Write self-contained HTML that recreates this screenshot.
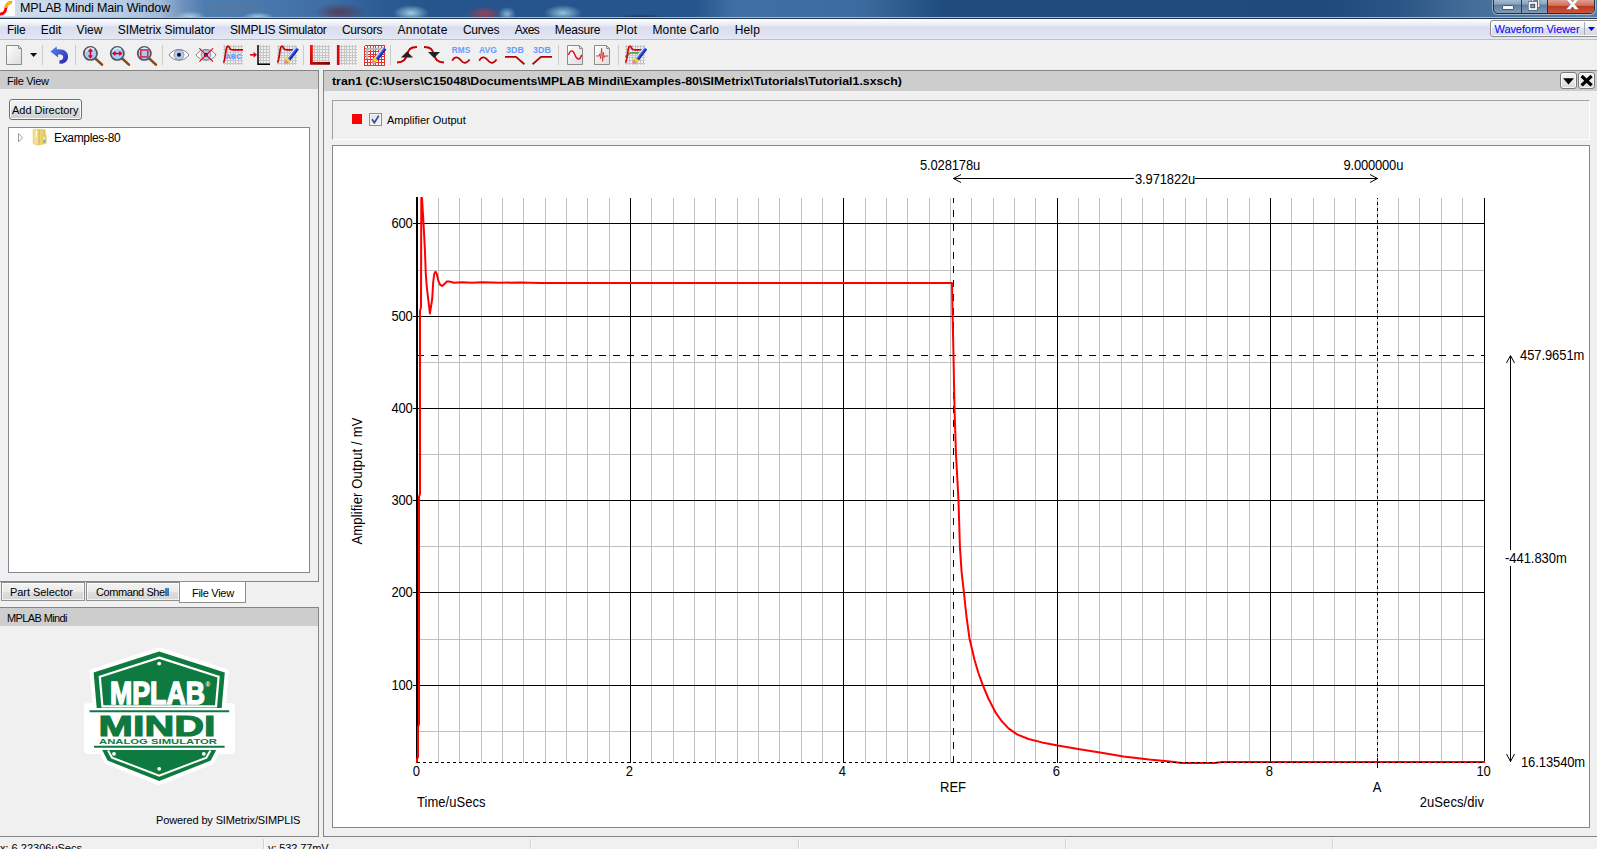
<!DOCTYPE html>
<html lang="en"><head><meta charset="utf-8"><title>MPLAB Mindi Main Window</title>
<style>
*{box-sizing:border-box;margin:0;padding:0}
html,body{width:1597px;height:849px;overflow:hidden;background:#f0f0f0}
body{position:relative;font-family:"Liberation Sans",sans-serif;font-size:11px;color:#000}
.abs{position:absolute}
.t{position:absolute;white-space:nowrap;line-height:1}
#titlebar{left:0;top:0;width:1597px;height:17px;overflow:hidden;background:
  radial-gradient(ellipse 26px 9px at 340px 12px, rgba(85,55,80,.9), rgba(85,55,80,0) 100%),
  radial-gradient(ellipse 18px 8px at 484px 14px, rgba(170,60,75,.85), rgba(170,60,75,0) 100%),
  radial-gradient(ellipse 9px 7px at 507px 14px, rgba(160,200,235,.8), rgba(160,200,235,0) 100%),
  radial-gradient(ellipse 18px 8px at 411px 13px, rgba(165,210,230,.95), rgba(165,210,230,0) 100%),
  radial-gradient(ellipse 19px 8px at 563px 13px, rgba(160,205,228,.9), rgba(160,205,228,0) 100%),
  radial-gradient(ellipse 26px 4px at 642px 18px, rgba(20,30,50,.7), rgba(20,30,50,0) 100%),
  radial-gradient(ellipse 40px 5px at 235px 8px, rgba(100,118,140,.55), rgba(100,118,140,0) 100%),
  radial-gradient(ellipse 16px 5px at 258px 17px, rgba(170,212,238,.85), rgba(170,212,238,0) 100%),
  radial-gradient(ellipse 16px 6px at 190px 17px, rgba(195,218,240,.8), rgba(195,218,240,0) 100%),
  linear-gradient(90deg,#d4e0ee 0px,#cbd9ea 40px,#b9cce2 120px,#a3bbd7 160px,#6e93bc 182px,#4d7cb0 205px,#4878ac 260px,#3d6da3 330px,#2a5a92 385px,#25558c 430px,#25558c 695px,#3f6fa3 735px,#3c6b9f 860px,#2a578a 915px,#1f4b7d 945px,#1f4a7c 1330px,#2a5584 1400px,#456d9a 1470px,#5b80a8 1597px)}
#menubar{left:0;top:19px;width:1597px;height:20px;background:linear-gradient(180deg,#ffffff 0px,#f3f5fa 3px,#e3e7f3 7px,#d9deee 8px,#dde1f0 14px,#e4e8f4 20px)}
.mi{position:absolute;top:4px;font-size:12px;line-height:14px;white-space:nowrap}
.sep{position:absolute;top:45px;width:1px;height:20px;background:#cbcbcb}
.ptitle{position:absolute;background:#cdcdcd}
.tab{position:absolute;border:1px solid #8e8f8f;background:linear-gradient(180deg,#f2f2f2 0,#ebebeb 50%,#dedede 51%,#d4d4d4 100%);box-shadow:inset 0 0 0 1px rgba(255,255,255,.7)}
.pt{font-size:13px}
</style></head><body>
<div id="titlebar" class="abs">
<div class="abs" style="left:0;top:0;width:15px;height:16px;background:#fff"></div>
<svg class="abs" style="left:0;top:0" width="15" height="16" viewBox="0 0 15 16"><defs><clipPath id="ct"><rect x="0" y="0" width="15" height="7.8"/></clipPath></defs><path d="M-1 14.2 C3.4 14.2 5 12.4 5.6 9.6 C6.2 6.4 6.6 2.4 11.6 2.3" fill="none" stroke="#ff0000" stroke-width="2.8"/><path d="M-1 14.2 C3.4 14.2 5 12.4 5.6 9.6 C6.2 6.4 6.6 2.4 11.6 2.3" fill="none" stroke="#ffb800" stroke-width="2.8" clip-path="url(#ct)"/></svg>
<div class="t" id="title" style="left:20px;top:1px;font-size:12.5px;line-height:14px;letter-spacing:-0.184px;">MPLAB Mindi Main Window</div>
<!-- caption buttons -->
<div class="abs" style="left:1493px;top:-4px;width:102px;height:18px;border:1px solid #23303f;border-radius:0 0 5px 5px;background:linear-gradient(180deg,#b9c9dc 0,#8aa3bf 45%,#5f7e9f 50%,#7f9bb8 100%);box-shadow:0 0 0 1px rgba(255,255,255,.45)"></div>
<div class="abs" style="left:1521px;top:0;width:1px;height:13px;background:#2c3a4b"></div>
<div class="abs" style="left:1547px;top:0;width:47px;height:13px;border-radius:0 0 4px 0;background:linear-gradient(180deg,#e0a090 0,#cf6a55 45%,#bb3a22 50%,#c9553a 100%);border-left:1px solid #3a2a2a"></div>
<div class="abs" style="left:1502px;top:5px;width:12px;height:5px;background:#f6f7f9;border:1px solid #4a5868;border-radius:1px"></div>
<svg class="abs" style="left:1525px;top:0" width="18" height="13" viewBox="1525 0 18 13"><rect x="1532.6" y="-0.6" width="6.2" height="7" fill="none" stroke="#3d4b5c" stroke-width="2.6"/><rect x="1532.6" y="-0.6" width="6.2" height="7" fill="none" stroke="#eef1f5" stroke-width="1.5"/><rect x="1529.5" y="2.9" width="6.6" height="6.2" fill="#6f88a4" stroke="#3d4b5c" stroke-width="3"/><rect x="1529.5" y="2.9" width="6.6" height="6.2" fill="#6f88a4" stroke="#f2f4f7" stroke-width="1.9"/><rect x="1530.9" y="4.3" width="3.8" height="3.4" fill="#7f97b2" stroke="#3d4b5c" stroke-width=".7"/></svg>
<div class="t" style="left:1566.6px;top:-3.5px;font-size:16px;font-weight:bold;color:#fff;line-height:14px;text-shadow:0 0 1px #40202a,0 0 1px #40202a;-webkit-text-stroke:.5px #fff;transform:scaleX(1.25);transform-origin:0 0">x</div>
</div>
<div class="abs" style="left:0;top:17px;width:1597px;height:1px;background:#a7bbd1"></div>
<div class="abs" style="left:0;top:18px;width:1597px;height:1px;background:#22364f"></div>
<div id="menubar" class="abs"><span class="mi" id="m0" style="left:7.0px;letter-spacing:-0.211px;">File</span><span class="mi" id="m1" style="left:40.8px;letter-spacing:-0.022px;">Edit</span><span class="mi" id="m2" style="left:76.6px;letter-spacing:-0.001px;">View</span><span class="mi" id="m3" style="left:117.7px;letter-spacing:-0.057px;">SIMetrix Simulator</span><span class="mi" id="m4" style="left:229.9px;letter-spacing:-0.275px;">SIMPLIS Simulator</span><span class="mi" id="m5" style="left:341.9px;letter-spacing:-0.245px;">Cursors</span><span class="mi" id="m6" style="left:397.5px;letter-spacing:0.257px;">Annotate</span><span class="mi" id="m7" style="left:462.9px;letter-spacing:-0.287px;">Curves</span><span class="mi" id="m8" style="left:514.8px;letter-spacing:-0.547px;">Axes</span><span class="mi" id="m9" style="left:554.8px;letter-spacing:-0.157px;">Measure</span><span class="mi" id="m10" style="left:615.7px;letter-spacing:0.28px;">Plot</span><span class="mi" id="m11" style="left:652.5px;letter-spacing:0.113px;">Monte Carlo</span><span class="mi" id="m12" style="left:734.7px;letter-spacing:0.155px;">Help</span><div class="abs" style="left:1490px;top:1px;width:110px;height:17px;border:1px solid #8b8b8b;border-radius:3px;background:linear-gradient(180deg,#fbfbfd 0,#eef0f6 45%,#dfe2ec 50%,#d6d9e6 100%);box-shadow:inset 0 0 0 1px rgba(255,255,255,.8)"></div>
<div class="t" id="wv" style="left:1494.5px;top:4px;font-size:11px;line-height:13px;color:#0000ff;letter-spacing:-0.08px;">Waveform Viewer</div>
<div class="abs" style="left:1584px;top:3px;width:1px;height:13px;background:#a9a9b4"></div>
<svg class="abs" style="left:1588px;top:8px" width="8" height="5"><path d="M0 0H7L3.5 4Z" fill="#0000ff"/></svg>
</div>
<div class="abs" style="left:0;top:39px;width:1597px;height:1px;background:#b9bfd0"></div>
<svg class="abs" style="left:0;top:40px" width="700" height="30" viewBox="0 40 700 30">
<defs><linearGradient id="gdoc" x1="0" y1="0" x2="1" y2="1"><stop offset="0" stop-color="#ffffff"/><stop offset="1" stop-color="#dcdcdc"/></linearGradient><linearGradient id="gundo" x1="0" y1="0" x2="1" y2="1"><stop offset="0" stop-color="#4f8ae8"/><stop offset="1" stop-color="#2e22b8"/></linearGradient><linearGradient id="gred" x1="0" y1="0" x2="1" y2="1"><stop offset="0" stop-color="#ff1010"/><stop offset="1" stop-color="#7a0000"/></linearGradient></defs>
<path d="M6.5 45.5H18.5L21.5 48.5V64.5H6.5Z" fill="url(#gdoc)" stroke="#8c8c8c"/><path d="M18.5 45.5V48.5H21.5" fill="none" stroke="#8c8c8c"/>
<path d="M30 53H37.2L33.6 57Z" fill="#111"/>
<path d="M50.4 51.4 L56.6 46.6 L57 49.4 C64 48.4 68.6 52 68 57.4 C67.6 61.6 63.6 64.4 59.4 63.6 L59.4 60.2 C62 60.4 63.4 58.8 63.2 56.8 C63 54.6 60.6 54.2 57.8 54.6 L58.2 57.4 Z" fill="url(#gundo)"/>
<g>
<path d="M95.4 58.6 L102.0 64.6" stroke="#8a4512" stroke-width="2.6" stroke-linecap="round"/>
<path d="M95.0 58.2 L97.4 60.4" stroke="#5a5f66" stroke-width="2.2"/>
<circle cx="90.4" cy="53.4" r="6.6" fill="#a9cbf7" stroke="#4e565f" stroke-width="1.7"/>
<path d="M85.80000000000001 51.6 A5 5 0 0 1 94.0 49.4" stroke="#e4f0ff" stroke-width="1.5" fill="none"/>
<path d="M90.4 50V57M88.6 51.6L90.4 49.4L92.2 51.6M88.6 55.4L90.4 57.6L92.2 55.4" stroke="#e00018" stroke-width="1.5" fill="none"/></g><g>
<path d="M122.3 58.6 L128.9 64.6" stroke="#8a4512" stroke-width="2.6" stroke-linecap="round"/>
<path d="M121.89999999999999 58.2 L124.3 60.4" stroke="#5a5f66" stroke-width="2.2"/>
<circle cx="117.3" cy="53.4" r="6.6" fill="#a9cbf7" stroke="#4e565f" stroke-width="1.7"/>
<path d="M112.7 51.6 A5 5 0 0 1 120.89999999999999 49.4" stroke="#e4f0ff" stroke-width="1.5" fill="none"/>
<path d="M113.8 53.4H120.8M115.4 51.6L113.2 53.4L115.4 55.2M119.2 51.6L121.4 53.4L119.2 55.2" stroke="#e00018" stroke-width="1.5" fill="none"/></g><g>
<path d="M149.3 58.6 L155.9 64.6" stroke="#8a4512" stroke-width="2.6" stroke-linecap="round"/>
<path d="M148.9 58.2 L151.3 60.4" stroke="#5a5f66" stroke-width="2.2"/>
<circle cx="144.3" cy="53.4" r="6.6" fill="#a9cbf7" stroke="#4e565f" stroke-width="1.7"/>
<path d="M139.70000000000002 51.6 A5 5 0 0 1 147.9 49.4" stroke="#e4f0ff" stroke-width="1.5" fill="none"/>
<rect x="140.8" y="49.9" width="7" height="7" fill="none" stroke="#d8243c" stroke-width="1.5"/></g><path d="M169 55 C174 47.6 184 47.6 189 55 C184 62 174 62 169 55Z" fill="#fffdf8" stroke="#555" stroke-width=".7"/><circle cx="179" cy="54.8" r="5" fill="#b4cbf6" stroke="#6a7896" stroke-width=".7"/><circle cx="179" cy="54.8" r="2" fill="#111"/><path d="M196 55 C201 47.6 211 47.6 216 55 C211 62 201 62 196 55Z" fill="#fffdf8" stroke="#555" stroke-width=".7"/><circle cx="206" cy="54.8" r="5" fill="#b4cbf6" stroke="#6a7896" stroke-width=".7"/><circle cx="206" cy="54.8" r="2" fill="#111"/><path d="M199.4 48.4L213 61.6M213 48.4L199.4 61.6" stroke="#e00010" stroke-width="1.2"/><path d="M224.4 45V65M227.3 45V65M230.1 45V65M233.0 45V65M235.8 45V65M238.7 45V65M241.6 45V65M223 46.4H243M223 49.3H243M223 52.1H243M223 55.0H243M223 57.8H243M223 60.7H243M223 63.6H243" stroke="#c6c6c6" stroke-width="1" fill="none" shape-rendering="crispEdges"/><path d="M223.4 62.6 C225 61 225.6 52 226.4 48.4 C227 45.6 228.6 45.6 229.4 47.8 C230 49.6 231 49.9 233 49.9 H243" fill="none" stroke="#c80000" stroke-width="1.7"/><text x="233.5" y="59.4" font-family="Liberation Sans,sans-serif" font-weight="bold" font-size="7.6" fill="#6896ff" text-anchor="middle" textLength="16" lengthAdjust="spacingAndGlyphs">ABC</text>
<path d="M260.9 45V64M263.8 45V64M266.6 45V64M269.5 45V64M259 46.4H270M259 49.3H270M259 52.1H270M259 55.0H270M259 57.8H270M259 60.7H270M259 63.6H270" stroke="#c6c6c6" stroke-width="1" fill="none" shape-rendering="crispEdges"/><path d="M258 45V64.3H270" fill="none" stroke="#000" stroke-width="1.5"/><path d="M250 54.8H254.4" stroke="#e00018" stroke-width="1.6"/><path d="M253.6 51.8L257 54.8L253.6 57.8Z" fill="#e00018"/>
<path d="M278.4 45V65M281.3 45V65M284.1 45V65M287.0 45V65M289.8 45V65M292.7 45V65M295.6 45V65M277 46.4H297M277 49.3H297M277 52.1H297M277 55.0H297M277 57.8H297M277 60.7H297M277 63.6H297" stroke="#c6c6c6" stroke-width="1" fill="none" shape-rendering="crispEdges"/><path d="M277.4 62.6 C279 61 279.6 52 280.4 48.4 C281 45.6 282.6 45.6 283.4 47.8 C284 49.6 285 49.9 287 49.9 H294" fill="none" stroke="#c80000" stroke-width="1.7"/><g transform="translate(285.0 63.5) rotate(-52)">
<rect x="5.6" y="-2.2" width="13.799999999999999" height="4.4" fill="#1c3ccc"/>
<rect x="5.6" y="-2.2" width="13.799999999999999" height="1.5" fill="#e6ecff"/>
<rect x="5.6" y="-0.9" width="13.799999999999999" height="1.1" fill="#5878ee"/>
<rect x="5.6" y="1.4" width="13.799999999999999" height=".8" fill="#10208c"/>
<rect x="3.2" y="-2.3" width="2.6" height="4.6" fill="#f6dc00"/>
<path d="M3.3 -2.2H1.6C-.9 -2.2 -.9 2.2 1.6 2.2H3.3Z" fill="#de8f96"/>
</g><path d="M314.2 45V62M317.1 45V62M319.9 45V62M322.8 45V62M325.6 45V62M328.5 45V62M312 46.4H330M312 49.3H330M312 52.1H330M312 55.0H330M312 57.8H330M312 60.7H330" stroke="#c6c6c6" stroke-width="1" fill="none" shape-rendering="crispEdges"/><path d="M311.4 45V63.4H330" fill="none" stroke="url(#gred)" stroke-width="2.8"/>
<path d="M341.2 45V65M344.1 45V65M346.9 45V65M349.8 45V65M352.6 45V65M355.5 45V65M339 46.4H357M339 49.3H357M339 52.1H357M339 55.0H357M339 57.8H357M339 60.7H357M339 63.6H357" stroke="#c6c6c6" stroke-width="1" fill="none" shape-rendering="crispEdges"/><path d="M338.2 45V65" fill="none" stroke="#e00010" stroke-width="2.6"/>
<rect x="364" y="45" width="21" height="21" fill="#fff"/><path d="M364.5 45.5V65.5M367.4 45.5V65.5M370.2 45.5V65.5M373.1 45.5V65.5M375.9 45.5V65.5M378.8 45.5V65.5M381.6 45.5V65.5M384.5 45.5V65.5M364.5 45.5H384.5M364.5 48.4H384.5M364.5 51.2H384.5M364.5 54.1H384.5M364.5 56.9H384.5M364.5 59.8H384.5M364.5 62.6H384.5M364.5 65.5H384.5" stroke="#e43030" stroke-width="1" fill="none" shape-rendering="crispEdges"/><path d="M367 59V48.8H382" fill="none" stroke="#b8b8b8" stroke-width="2.2"/><g transform="translate(372.6 63.5) rotate(-52)">
<rect x="5.6" y="-2.2" width="13.799999999999999" height="4.4" fill="#1c3ccc"/>
<rect x="5.6" y="-2.2" width="13.799999999999999" height="1.5" fill="#e6ecff"/>
<rect x="5.6" y="-0.9" width="13.799999999999999" height="1.1" fill="#5878ee"/>
<rect x="5.6" y="1.4" width="13.799999999999999" height=".8" fill="#10208c"/>
<rect x="3.2" y="-2.3" width="2.6" height="4.6" fill="#f6dc00"/>
<path d="M3.3 -2.2H1.6C-.9 -2.2 -.9 2.2 1.6 2.2H3.3Z" fill="#de8f96"/>
</g><path d="M397 62.4 C405 62.4 405.6 58 407 54.6 C408.4 51 409 47 417 47" fill="none" stroke="#c40000" stroke-width="2"/><path d="M401 57.6H413L407 51.4Z" fill="#222"/>
<path d="M424 47 C432 47 432.6 51 434 54.6 C435.4 58 436 62.4 444 62.4" fill="none" stroke="#c40000" stroke-width="2"/><path d="M428 52H440L434 58Z" fill="#222"/>
<text x="461" y="52.8" font-family="Liberation Sans,sans-serif" font-weight="bold" font-size="8.6" fill="#6a9cff" text-anchor="middle" textLength="18.4" lengthAdjust="spacingAndGlyphs">RMS</text><path d="M452.2 60.6 C454.2 57 457.2 56 460.8 60.2 C464.2 64.4 467.2 63 469.59999999999997 59.6" fill="none" stroke="#b80000" stroke-width="1.8"/><text x="488" y="52.8" font-family="Liberation Sans,sans-serif" font-weight="bold" font-size="8.6" fill="#6a9cff" text-anchor="middle" textLength="18" lengthAdjust="spacingAndGlyphs">AVG</text><path d="M479.2 60.6 C481.2 57 484.2 56 487.8 60.2 C491.2 64.4 494.2 63 496.59999999999997 59.6" fill="none" stroke="#b80000" stroke-width="1.8"/><text x="515" y="52.8" font-family="Liberation Sans,sans-serif" font-weight="bold" font-size="8.6" fill="#6a9cff" text-anchor="middle" textLength="17.8" lengthAdjust="spacingAndGlyphs">3DB</text><path d="M505 56.8H516L524.4 64.2" fill="none" stroke="#b80000" stroke-width="1.8"/><text x="542" y="52.8" font-family="Liberation Sans,sans-serif" font-weight="bold" font-size="8.6" fill="#6a9cff" text-anchor="middle" textLength="17.8" lengthAdjust="spacingAndGlyphs">3DB</text><path d="M532.6 64.2L541 56.8H552" fill="none" stroke="#b80000" stroke-width="1.8"/>
<path d="M567.5 45.5H579.5L582.5 48.5V64.5H567.5Z" fill="url(#gdoc)" stroke="#8c8c8c"/><path d="M579.5 45.5V48.5H582.5" fill="none" stroke="#8c8c8c"/><path d="M568.6 55 C570 49.6 573 49.6 575 55 C577 60.4 580 60.4 581.6 55" fill="none" stroke="#e00018" stroke-width="1.3"/><path d="M594.5 45.5H606.5L609.5 48.5V64.5H594.5Z" fill="url(#gdoc)" stroke="#8c8c8c"/><path d="M606.5 45.5V48.5H609.5" fill="none" stroke="#8c8c8c"/><path d="M596 56H599L599.8 53.8L600.6 58.6L601.6 48.4L602.6 61.4L603.4 52.4L604.2 57.6L605 56H608" fill="none" stroke="#d03030" stroke-width=".9"/>
<path d="M626.4 45V65M629.3 45V65M632.1 45V65M635.0 45V65M637.8 45V65M640.7 45V65M643.6 45V65M625 46.4H645M625 49.3H645M625 52.1H645M625 55.0H645M625 57.8H645M625 60.7H645M625 63.6H645" stroke="#c6c6c6" stroke-width="1" fill="none" shape-rendering="crispEdges"/><path d="M625.4 57 C627 56 628 53 631 53 H641" fill="none" stroke="#30a040" stroke-width="1.6"/><path d="M625.4 62.6 C627 61 627.6 52 628.4 48.4 C629 45.6 630.6 45.6 631.4 47.8 C632 49.6 633 49.9 635 49.9 H643" fill="none" stroke="#e00010" stroke-width="1.7"/><g transform="translate(633.4 63.5) rotate(-52)">
<rect x="5.6" y="-2.2" width="13.799999999999999" height="4.4" fill="#1c3ccc"/>
<rect x="5.6" y="-2.2" width="13.799999999999999" height="1.5" fill="#e6ecff"/>
<rect x="5.6" y="-0.9" width="13.799999999999999" height="1.1" fill="#5878ee"/>
<rect x="5.6" y="1.4" width="13.799999999999999" height=".8" fill="#10208c"/>
<rect x="3.2" y="-2.3" width="2.6" height="4.6" fill="#f6dc00"/>
<path d="M3.3 -2.2H1.6C-.9 -2.2 -.9 2.2 1.6 2.2H3.3Z" fill="#de8f96"/>
</g></svg>
<div class="sep" style="left:42px"></div><div class="sep" style="left:75px"></div><div class="sep" style="left:162px"></div><div class="sep" style="left:303px"></div><div class="sep" style="left:390px"></div><div class="sep" style="left:558px"></div><div class="sep" style="left:618px"></div>
<div class="abs" style="left:-1px;top:70px;width:320px;height:512px;border:1px solid #848484"></div>
<div class="ptitle" style="left:0;top:71px;width:318px;height:18px"></div>
<div class="t" id="fv1" style="letter-spacing:-0.304px;left:7px;top:75px;font-size:11px;line-height:13px">File View</div>
<div class="abs" style="left:9px;top:99px;width:73px;height:21px;border:1px solid #707070;border-radius:3px;background:linear-gradient(180deg,#f2f2f2 0,#ebebeb 48%,#dddddd 52%,#cfcfcf 100%);box-shadow:inset 0 0 0 1px rgba(255,255,255,.85)"></div>
<div class="t" id="adddir" style="letter-spacing:-0.011px;left:12px;top:104px;font-size:11px;line-height:13px">Add Directory</div>
<div class="abs" style="left:8px;top:127px;width:302px;height:446px;background:#fff;border:1px solid #828790"></div>
<svg class="abs" style="left:16px;top:128px" width="34" height="18" viewBox="16 128 34 18"><path d="M18.5 133.5L22.5 137.8L18.5 142Z" fill="#fff" stroke="#a0a0a0" stroke-width="1"/><defs><linearGradient id="gf" x1="0" y1="0" x2="1" y2="0"><stop offset="0" stop-color="#efd878"/><stop offset="1" stop-color="#e4c352"/></linearGradient></defs><path d="M39 129.4H44Q45.2 129.4 45.2 130.6V134.4Q46.2 134.8 46.2 136V143.2Q43 144.4 39 144.8Z" fill="url(#gf)" stroke="#d9b84e" stroke-width=".5"/><path d="M33 130.6Q33 129.2 34.4 129.2H38.6L39 144.8Q36 145.2 33.2 143.6Z" fill="#f2e08f" stroke="#dcc05a" stroke-width=".5"/><path d="M36.4 130.6V137" stroke="#fffbe6" stroke-width="1.1"/><path d="M39 129.6V144.6" stroke="#d2ad42" stroke-width=".7"/><rect x="43.6" y="137" width="1.3" height="3" fill="#f3f6fb"/><rect x="43.6" y="139.8" width="1.3" height="2.4" fill="#3aa0e8"/></svg>
<div class="t" id="ex80" style="letter-spacing:-0.331px;left:54px;top:131px;font-size:12px;line-height:14px">Examples-80</div>
<div class="tab" style="left:1px;top:582px;width:84px;height:19px"></div><div class="tab" style="left:86px;top:582px;width:94px;height:19px"></div><div class="abs" style="left:179px;top:581px;width:67px;height:22px;border:1px solid #8e8f8f;background:#fff"></div>
<div class="t" id="tab1" style="letter-spacing:-0.061px;left:10px;top:586px;font-size:11px;line-height:13px">Part Selector</div><div class="t" id="tab2" style="letter-spacing:-0.42px;left:96px;top:586px;font-size:11px;line-height:13px">Command Shell</div><div class="t" id="tab3" style="letter-spacing:-0.293px;left:192px;top:587px;font-size:11px;line-height:13px">File View</div>
<div class="abs" style="left:-1px;top:607px;width:320px;height:230px;border:1px solid #848484"></div>
<div class="ptitle" style="left:0;top:608px;width:318px;height:18px"></div>
<div class="t" id="mm" style="letter-spacing:-0.613px;left:7px;top:612px;font-size:11px;line-height:13px">MPLAB Mindi</div>
<div class="t" id="pw" style="letter-spacing:-0.135px;left:156px;top:814px;font-size:11px;line-height:13px">Powered by SIMetrix/SIMPLIS</div>
<svg class="abs" style="left:80px;top:644px" width="160" height="146" viewBox="80 644 160 146">
<g stroke="#ffffff" stroke-width="8" stroke-linejoin="round" fill="#ffffff">
<path d="M159.2 651.4L224.8 672.6L221.6 707.6H96.8L93.6 672.6Z"/>
<rect x="88" y="707" width="143" height="43"/>
<path d="M102.4 749L107.6 760.6L159.2 781L210.8 760.6L216 749Z"/>
</g>
<path d="M159.2 651.4L224.8 672.6L221.6 709H96.8L93.6 672.6Z" fill="#0f7a40"/>
<path d="M159.2 657.6L218.6 676.8L216 706.4H102.4L99.8 676.8Z" fill="none" stroke="#fff" stroke-width="2.2"/>
<rect x="84" y="708" width="151" height="41.6" fill="#fff"/>
<path d="M89.6 711.2H229.2" stroke="#0f7a40" stroke-width="2"/>
<path d="M94 746.8H224.6" stroke="#0f7a40" stroke-width="2"/>
<path d="M102.2 750L107.6 760.6L159.2 781L210.8 760.6L216.2 750Z" fill="#0f7a40"/>
<path d="M108 750.6L112 757.6L159.2 775.8L206.4 757.6L210.4 750.6" fill="none" stroke="#fff" stroke-width="2"/>
<circle cx="159.2" cy="663.6" r="1.9" fill="#fff"/><circle cx="114" cy="753.8" r="1.9" fill="#fff"/><circle cx="203.8" cy="753.8" r="1.9" fill="#fff"/><circle cx="159.2" cy="768.8" r="1.9" fill="#fff"/>
<text x="110" y="704" font-family="Liberation Sans,sans-serif" font-weight="bold" font-size="32" fill="#fff" stroke="#fff" stroke-width="1.5" textLength="95" lengthAdjust="spacingAndGlyphs">MPLAB</text>
<text x="205.6" y="687" font-family="Liberation Sans,sans-serif" font-size="6.5" font-weight="bold" fill="#fff">®</text>
<text x="98.6" y="735.6" font-family="Liberation Sans,sans-serif" font-weight="bold" font-size="28.6" fill="#0f7a40" stroke="#0f7a40" stroke-width="1.1" textLength="117" lengthAdjust="spacingAndGlyphs">MINDI</text>
<text x="99" y="744.2" font-family="Liberation Sans,sans-serif" font-weight="bold" font-size="7.4" fill="#0f7a40" textLength="118" lengthAdjust="spacingAndGlyphs">ANALOG SIMULATOR</text>
</svg>
<div class="t" id="sb1" style="letter-spacing:0.003px;left:0px;top:842px;font-size:11px;line-height:13px">x: 6.22306uSecs</div><div class="abs" style="left:263px;top:839px;width:2px;height:10px;border-left:1px solid #d2d2d2;border-right:1px solid #fafafa"></div><div class="abs" style="left:530px;top:839px;width:2px;height:10px;border-left:1px solid #d2d2d2;border-right:1px solid #fafafa"></div><div class="abs" style="left:798px;top:839px;width:2px;height:10px;border-left:1px solid #d2d2d2;border-right:1px solid #fafafa"></div><div class="abs" style="left:1065px;top:839px;width:2px;height:10px;border-left:1px solid #d2d2d2;border-right:1px solid #fafafa"></div><div class="abs" style="left:1332px;top:839px;width:2px;height:10px;border-left:1px solid #d2d2d2;border-right:1px solid #fafafa"></div><div class="t" id="sb2" style="letter-spacing:-0.106px;left:268px;top:842px;font-size:11px;line-height:13px">y: 532.77mV</div>
<div class="abs" style="left:323px;top:70px;width:1280px;height:767px;border:1px solid #848484"></div>
<div class="ptitle" style="left:324px;top:71px;width:1273px;height:20px"></div>
<div class="t" id="ttl" style="left:332px;top:75px;font-size:11px;line-height:13px;font-weight:bold;transform:scaleX(1.12);transform-origin:0 0">tran1 (C:\Users\C15048\Documents\MPLAB Mindi\Examples-80\SIMetrix\Tutorials\Tutorial1.sxsch)</div>
<div class="abs" style="left:1560px;top:72px;width:17px;height:17px;border:1px solid #7a7a7a;border-radius:3px;background:linear-gradient(180deg,#f4f4f4 0,#e9e9e9 50%,#d8d8d8 100%);box-shadow:inset 0 0 0 1px rgba(255,255,255,.7)"></div><div class="abs" style="left:1578px;top:72px;width:17px;height:17px;border:1px solid #7a7a7a;border-radius:3px;background:linear-gradient(180deg,#f4f4f4 0,#e9e9e9 50%,#d8d8d8 100%);box-shadow:inset 0 0 0 1px rgba(255,255,255,.7)"></div><svg class="abs" style="left:1560px;top:72px" width="36" height="17" viewBox="1560 72 36 17"><path d="M1563 78.2H1574L1568.5 84.4Z" fill="#000"/><path d="M1581.6 76L1591.6 85.4M1591.6 76L1581.6 85.4" stroke="#000" stroke-width="3.2"/></svg>
<div class="abs" style="left:332px;top:100px;width:1258px;height:40px;border-top:1px solid #a0a0a0;border-left:1px solid #a0a0a0;border-right:1px solid #fff;border-bottom:1px solid #fff"></div>
<div class="abs" style="left:352px;top:114px;width:10px;height:10px;background:#ff0000"></div><div class="abs" style="left:369px;top:113px;width:13px;height:13px;border:1px solid #8e8f8f;background:linear-gradient(135deg,#dcdfe4 0,#f6f6f6 100%);box-shadow:inset 0 0 0 1px #f4f4f4"></div><svg class="abs" style="left:369px;top:113px" width="13" height="13"><path d="M3 6.2L5.4 9.6L9.8 2.6" fill="none" stroke="#3a4a9a" stroke-width="1.7"/></svg><div class="t" id="lg" style="letter-spacing:-0.011px;left:387px;top:114px;font-size:11px;line-height:13px">Amplifier Output</div>
<div class="abs" style="left:332px;top:145px;width:1258px;height:683px;background:#fff;border:1px solid #828790"></div>
<svg class="abs" style="left:333px;top:146px" width="1256" height="681" viewBox="333 146 1256 681" font-family="Liberation Sans,sans-serif" font-size="13">
<path d="M438.5 198V763M459.5 198V763M481.5 198V763M502.5 198V763M523.5 198V763M545.5 198V763M566.5 198V763M587.5 198V763M609.5 198V763M651.5 198V763M673.5 198V763M694.5 198V763M715.5 198V763M737.5 198V763M758.5 198V763M779.5 198V763M801.5 198V763M822.5 198V763M865.5 198V763M886.5 198V763M907.5 198V763M929.5 198V763M950.5 198V763M971.5 198V763M993.5 198V763M1014.5 198V763M1035.5 198V763M1078.5 198V763M1099.5 198V763M1121.5 198V763M1142.5 198V763M1163.5 198V763M1185.5 198V763M1206.5 198V763M1227.5 198V763M1249.5 198V763M1291.5 198V763M1313.5 198V763M1334.5 198V763M1355.5 198V763M1377.5 198V763M1398.5 198V763M1419.5 198V763M1441.5 198V763M1462.5 198V763M418 270.5H1484M418 362.5H1484M418 454.5H1484M418 546.5H1484M418 639.5H1484M418 731.5H1484" stroke="#c0c0c0" stroke-width="1" fill="none" shape-rendering="crispEdges"/>
<path d="M630.5 198V763M843.5 198V763M1057.5 198V763M1270.5 198V763M1484.5 198V763M413 223.5H1484M413 316.5H1484M413 408.5H1484M413 500.5H1484M413 592.5H1484M413 685.5H1484" stroke="#000" stroke-width="1" fill="none" shape-rendering="crispEdges"/>
<path d="M417 197V763" stroke="#000" stroke-width="2" shape-rendering="crispEdges"/>
<path d="M417 355.5H1484" stroke="#000" stroke-width="1" stroke-dasharray="7 7" shape-rendering="crispEdges"/><path d="M953.5 198V763" stroke="#000" stroke-width="1" stroke-dasharray="7 7" stroke-dashoffset="2" shape-rendering="crispEdges"/><path d="M1377.5 198V760" stroke="#000" stroke-width="1" stroke-dasharray="3 3" stroke-dashoffset="2" shape-rendering="crispEdges"/><path d="M1377.5 758V768" stroke="#000" stroke-width="1" shape-rendering="crispEdges"/>
<path d="M417 763 L417 759 L418 757 L418 727 L419 724 L419 497 L420 494 L420 311 L421 307 L421.3 198 L422 198 L423 215 L424 232 L425 252 L425.8 274 L426.8 287 L428.3 300 L429.9 313.5 L432.2 299 L433.2 282 L434.2 274 L435.5 271.8 L436.8 274 L438.3 280.6 L440 284.6 L442.1 286 L444.4 284 L446.7 281.6 L449 281.4 L454 282.8 L462 282.2 L472 282.8 L482 282.2 L500 282.8 L520 282.4 L540 283 L952 283 L952.6 316 L953.5 355 L954.5 408 L956 455 L957.4 480 L958.5 500.3 L959.9 546.6 L961.6 572 L963.9 592.3 L966.4 616 L969.4 637.9 L974.5 659.8 L978.4 673 L982.9 685.3 L988.6 699 L995.7 712.7 L1001.6 721 L1008.5 728.4 L1017 734.4 L1028.5 739 L1042 742.4 L1057.7 745.5 L1079.6 749.2 L1101.5 752.8 L1123.4 756.5 L1149 759.6 L1170 761.6 L1181.8 763 L1214.7 763 L1222 762 L1485 762" stroke="#ff0000" stroke-width="2" fill="none" stroke-linejoin="round"/>
<path d="M417 762.5H1484" stroke="#000" stroke-width="1" stroke-dasharray="3 3" shape-rendering="crispEdges"/>
<text id="y600" transform="translate(412.6 228) scale(1 1.075)" text-anchor="end" style="letter-spacing:-0.191px;">600</text><text id="y500" transform="translate(412.6 321) scale(1 1.075)" text-anchor="end" style="letter-spacing:-0.191px;">500</text><text id="y400" transform="translate(412.6 413) scale(1 1.075)" text-anchor="end" style="letter-spacing:-0.191px;">400</text><text id="y300" transform="translate(412.6 505) scale(1 1.075)" text-anchor="end" style="letter-spacing:-0.191px;">300</text><text id="y200" transform="translate(412.6 597) scale(1 1.075)" text-anchor="end" style="letter-spacing:-0.191px;">200</text><text id="y100" transform="translate(412.6 690) scale(1 1.075)" text-anchor="end" style="letter-spacing:-0.191px;">100</text>
<text id="x0" transform="translate(416.4 776) scale(1 1.075)" text-anchor="middle" style="">0</text><text id="x2" transform="translate(629.4 776) scale(1 1.075)" text-anchor="middle" style="">2</text><text id="x4" transform="translate(842.4 776) scale(1 1.075)" text-anchor="middle" style="">4</text><text id="x6" transform="translate(1056.4 776) scale(1 1.075)" text-anchor="middle" style="">6</text><text id="x8" transform="translate(1269.4 776) scale(1 1.075)" text-anchor="middle" style="">8</text><text id="x10" transform="translate(1483.4 776) scale(1 1.075)" text-anchor="middle" style="letter-spacing:-0.228px;">10</text>
<text id="tus" transform="translate(417 807) scale(1 1.075)" style="letter-spacing:0.041px;">Time/uSecs</text><text id="div" transform="translate(1484 807) scale(1 1.075)" text-anchor="end" style="letter-spacing:0.066px;">2uSecs/div</text><text id="ref" transform="translate(953 792) scale(1 1.075)" text-anchor="middle" style="letter-spacing:-0.062px;">REF</text><text id="ca" transform="translate(1377 792) scale(1 1.075)" text-anchor="middle" style="">A</text><text id="yl" transform="translate(362 544.5) rotate(-90) scale(1 1.075)" style="letter-spacing:0.17px;">Amplifier Output / mV</text>
<path d="M953 178.5H1378" stroke="#000" stroke-width="1" shape-rendering="crispEdges"/><path d="M961 174.5L953.5 178.5L961 182.5M1370 174.5L1377.5 178.5L1370 182.5" fill="none" stroke="#000" stroke-width="1"/><rect x="1134" y="172" width="61" height="14" fill="#fff"/><text id="c1" transform="translate(920 170) scale(1 1.075)" style="letter-spacing:-0.145px;">5.028178u</text><text id="c2" transform="translate(1135 184) scale(1 1.075)" style="letter-spacing:-0.134px;">3.971822u</text><text id="c3" transform="translate(1343.5 170) scale(1 1.075)" style="letter-spacing:-0.19px;">9.000000u</text>
<path d="M1510.5 356V762" stroke="#000" stroke-width="1" shape-rendering="crispEdges"/><path d="M1506.5 363L1510.5 355.5L1514.5 363M1506.5 754L1510.5 761.5L1514.5 754" fill="none" stroke="#000" stroke-width="1"/><rect x="1504" y="550" width="64" height="16" fill="#fff"/><text id="r1" transform="translate(1520 360) scale(1 1.075)" style="letter-spacing:-0.078px;">457.9651m</text><text id="r2" transform="translate(1505 563) scale(1 1.075)" style="letter-spacing:-0.044px;">-441.830m</text><text id="r3" transform="translate(1521 767) scale(1 1.075)" style="letter-spacing:-0.1px;">16.13540m</text>
</svg>
</body></html>
